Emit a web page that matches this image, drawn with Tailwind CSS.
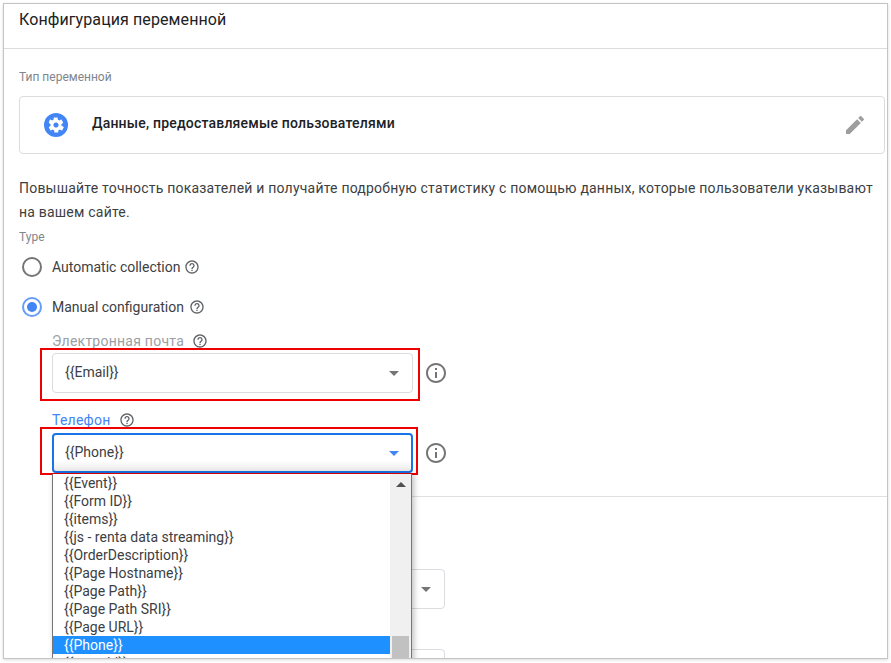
<!DOCTYPE html>
<html lang="en">
<head>
  <meta charset="UTF-8">
  <title>Конфигурация переменной</title>
  <script src="https://cdn.jsdelivr.net/npm/@tailwindcss/browser@4"></script>
</head>
<body class="bg-white font-['Roboto',sans-serif] w-[891px] h-[663px] overflow-hidden">
  <div class="ml-[3px] mt-[3px] w-[885px] h-[656px] border border-[#c4c4c4] shadow-[0_1px_3px_rgba(0,0,0,0.15)] overflow-hidden relative bg-white">

    <!-- Header -->
    <div class="h-[45px] border-b border-[#dadce0] pl-[15px] pt-[6px] text-[16px] leading-5 tracking-[0.1px] text-[#202124]">Конфигурация переменной</div>

    <div class="pl-[15px] pr-[2px]">
      <div class="mt-5 text-[12px] leading-4 text-[#80868b]">Тип переменной</div>

      <!-- Variable type card -->
      <div class="mt-[11px] h-[58px] border border-[#dadce0] rounded flex items-center pl-6 pr-[17px]">
        <svg class="w-6 h-6" viewBox="0 0 24 24">
          <circle cx="12" cy="12" r="12" fill="#4285f4"/>
          <path fill="#fff" d="M17.4 12.8c0-.3.1-.5.1-.8s0-.5-.1-.8l1.6-1.3c.2-.1.2-.3.1-.5l-1.5-2.6c-.1-.2-.3-.2-.5-.2l-1.9.8c-.4-.3-.8-.5-1.3-.7l-.3-2c0-.2-.2-.3-.4-.3h-3c-.2 0-.3.1-.4.3l-.3 2c-.5.2-.9.4-1.3.7l-1.9-.8c-.2-.1-.4 0-.5.2L4.9 9.4c-.1.2-.1.4.1.5l1.6 1.3c0 .3-.1.5-.1.8s0 .5.1.8L5 14.1c-.2.1-.2.3-.1.5l1.5 2.6c.1.2.3.2.5.2l1.9-.8c.4.3.8.5 1.3.7l.3 2c0 .2.2.3.4.3h3c.2 0 .3-.1.4-.3l.3-2c.5-.2.9-.4 1.3-.7l1.9.8c.2.1.4 0 .5-.2l1.5-2.6c.1-.2.1-.4-.1-.5l-1.6-1.3zM12 14.6c-1.4 0-2.6-1.2-2.6-2.6s1.2-2.6 2.6-2.6 2.6 1.2 2.6 2.6-1.2 2.6-2.6 2.6z"/>
        </svg>
        <span class="ml-6 mb-1 text-[14px] font-medium text-[#202124] tracking-[0.2px]">Данные, предоставляемые пользователями</span>
        <svg class="ml-auto w-6 h-6" viewBox="0 0 24 24" fill="#9e9e9e"><path d="M3 17.25V21h3.75L17.81 9.94l-3.75-3.75L3 17.25zM20.71 7.04a1 1 0 0 0 0-1.41l-2.34-2.34a1 1 0 0 0-1.41 0l-1.83 1.83 3.75 3.75 1.83-1.83z"/></svg>
      </div>

      <p class="mt-[22px] text-[14px] leading-6 tracking-[0.21px] text-[#3c4043] w-[864px]">Повышайте точность показателей и получайте подробную статистику с помощью данных, которые пользователи указывают на вашем сайте.</p>

      <div class="mt-[5px] text-[12px] leading-4 text-[#80868b]">Type</div>

      <!-- Radios -->
      <div class="mt-3 ml-[3px] flex items-center h-5 text-[14px] text-[#3c4043]">
        <span class="w-5 h-5 rounded-full border-2 border-[#757575] shrink-0"></span>
        <span class="ml-[10px]">Automatic collection</span>
        <svg class="ml-1 w-4 h-4" viewBox="0 0 24 24" fill="#5f6368"><path d="M11 18h2v-2h-2v2zm1-16C6.48 2 2 6.48 2 12s4.48 10 10 10 10-4.48 10-10S17.52 2 12 2zm0 18c-4.41 0-8-3.59-8-8s3.59-8 8-8 8 3.59 8 8-3.59 8-8 8zm0-14c-2.21 0-4 1.79-4 4h2c0-1.1.9-2 2-2s2 .9 2 2c0 2-3 1.75-3 5h2c0-2.25 3-2.5 3-5 0-2.21-1.79-4-4-4z"/></svg>
      </div>
      <div class="mt-5 ml-[3px] flex items-center h-5 text-[14px] text-[#3c4043]">
        <span class="w-5 h-5 rounded-full border-2 border-[#669df6] shrink-0 flex items-center justify-center"><span class="w-[10px] h-[10px] rounded-full bg-[#4285f4]"></span></span>
        <span class="ml-[10px]">Manual configuration</span>
        <svg class="ml-[5px] w-4 h-4" viewBox="0 0 24 24" fill="#5f6368"><path d="M11 18h2v-2h-2v2zm1-16C6.48 2 2 6.48 2 12s4.48 10 10 10 10-4.48 10-10S17.52 2 12 2zm0 18c-4.41 0-8-3.59-8-8s3.59-8 8-8 8 3.59 8 8-3.59 8-8 8zm0-14c-2.21 0-4 1.79-4 4h2c0-1.1.9-2 2-2s2 .9 2 2c0 2-3 1.75-3 5h2c0-2.25 3-2.5 3-5 0-2.21-1.79-4-4-4z"/></svg>
      </div>

      <!-- Email -->
      <div class="mt-4 ml-[33px] flex items-center h-4 text-[14px] tracking-[0.25px] text-[#9aa0a6]">
        <span>Электронная почта</span>
        <svg class="ml-2 w-4 h-4" viewBox="0 0 24 24" fill="#5f6368"><path d="M11 18h2v-2h-2v2zm1-16C6.48 2 2 6.48 2 12s4.48 10 10 10 10-4.48 10-10S17.52 2 12 2zm0 18c-4.41 0-8-3.59-8-8s3.59-8 8-8 8 3.59 8 8-3.59 8-8 8zm0-14c-2.21 0-4 1.79-4 4h2c0-1.1.9-2 2-2s2 .9 2 2c0 2-3 1.75-3 5h2c0-2.25 3-2.5 3-5 0-2.21-1.79-4-4-4z"/></svg>
      </div>
      <div class="mt-1 ml-[33px] flex items-center">
        <div class="w-[361px] h-10 border border-[#dadce0] rounded flex items-center pl-3 pr-[13px] text-[14px] text-[#3c4043]">
          <span class="mb-[2px]">{{Email}}</span>
          <span class="ml-auto w-0 h-0 border-x-[5px] border-x-transparent border-t-[5px] border-t-[#757575]"></span>
        </div>
        <svg class="ml-[11px] w-6 h-6" viewBox="0 0 24 24" fill="#757575"><path d="M11 7h2v2h-2V7zm0 4h2v6h-2v-6zm1-9C6.48 2 2 6.48 2 12s4.48 10 10 10 10-4.48 10-10S17.52 2 12 2zm0 18c-4.41 0-8-3.59-8-8s3.59-8 8-8 8 3.59 8 8-3.59 8-8 8z"/></svg>
      </div>

      <!-- Phone -->
      <div class="mt-[19px] ml-[33px] flex items-center h-4 text-[14px] tracking-[0.25px] text-[#4285f4]">
        <span>Телефон</span>
        <svg class="ml-2 w-4 h-4" viewBox="0 0 24 24" fill="#5f6368"><path d="M11 18h2v-2h-2v2zm1-16C6.48 2 2 6.48 2 12s4.48 10 10 10 10-4.48 10-10S17.52 2 12 2zm0 18c-4.41 0-8-3.59-8-8s3.59-8 8-8 8 3.59 8 8-3.59 8-8 8zm0-14c-2.21 0-4 1.79-4 4h2c0-1.1.9-2 2-2s2 .9 2 2c0 2-3 1.75-3 5h2c0-2.25 3-2.5 3-5 0-2.21-1.79-4-4-4z"/></svg>
      </div>
      <div class="mt-[5px] ml-[33px] flex items-center">
        <div class="w-[361px] h-10 border-2 border-[#1a73e8] rounded flex items-center pl-[11px] pr-3 text-[14px] text-[#3c4043] bg-gradient-to-b from-white from-70% to-[#ececec]">
          <span class="mb-[2px]">{{Phone}}</span>
          <span class="ml-auto w-0 h-0 border-x-[5px] border-x-transparent border-t-[5px] border-t-[#4285f4]"></span>
        </div>
        <svg class="ml-[11px] w-6 h-6" viewBox="0 0 24 24" fill="#757575"><path d="M11 7h2v2h-2V7zm0 4h2v6h-2v-6zm1-9C6.48 2 2 6.48 2 12s4.48 10 10 10 10-4.48 10-10S17.52 2 12 2zm0 18c-4.41 0-8-3.59-8-8s3.59-8 8-8 8 3.59 8 8-3.59 8-8 8z"/></svg>
      </div>

      <!-- Section behind the open list -->
      <div class="mt-[23px] ml-[33px] w-[835px] border-t border-[#e0e0e0]"></div>
      <div class="mt-[72px] ml-[33px] w-[393px] h-10 border border-[#dadce0] rounded flex items-center pr-[13px]">
        <span class="ml-auto w-0 h-0 border-x-[5px] border-x-transparent border-t-[5px] border-t-[#757575]"></span>
      </div>
      <div class="mt-10 ml-[33px] w-[393px] h-10 border border-[#dadce0] rounded"></div>
    </div>

    <!-- Red highlight boxes -->
    <div class="absolute left-[36px] top-[344px] w-[380px] h-[53px] border-[2px] border-[#ee0000]"></div>
    <div class="absolute left-[36px] top-[423px] w-[378px] h-[48px] border-[2px] border-[#ee0000]"></div>

    <!-- Open select list -->
    <div class="absolute left-[48px] top-[470px] w-[360px] h-[190px] bg-white border-l border-r border-[#767676] shadow-[2px_0_6px_rgba(0,0,0,0.25)] flex overflow-hidden text-[14px] leading-[18px] text-[#3c4043]">
      <div class="flex-1 min-w-0">
        <div class="pl-[11px]">{{Event}}</div>
        <div class="pl-[11px]">{{Form ID}}</div>
        <div class="pl-[11px]">{{items}}</div>
        <div class="pl-[11px]">{{js - renta data streaming}}</div>
        <div class="pl-[11px]">{{OrderDescription}}</div>
        <div class="pl-[11px]">{{Page Hostname}}</div>
        <div class="pl-[11px]">{{Page Path}}</div>
        <div class="pl-[11px]">{{Page Path SRI}}</div>
        <div class="pl-[11px]">{{Page URL}}</div>
        <div class="pl-[11px] bg-[#1e90ff] text-white">{{Phone}}</div>
        <div class="pl-[11px]">{{user_id}}</div>
      </div>
      <div class="w-[21px] bg-[#f0f0f0] relative">
        <span class="absolute left-[6px] top-[8px] w-0 h-0 border-x-[5px] border-x-transparent border-b-[5px] border-b-[#505050]"></span>
        <div class="absolute left-[2px] right-[2px] top-[162px] h-6 bg-[#c1c1c1]"></div>
      </div>
    </div>
  </div>
</body>
</html>
